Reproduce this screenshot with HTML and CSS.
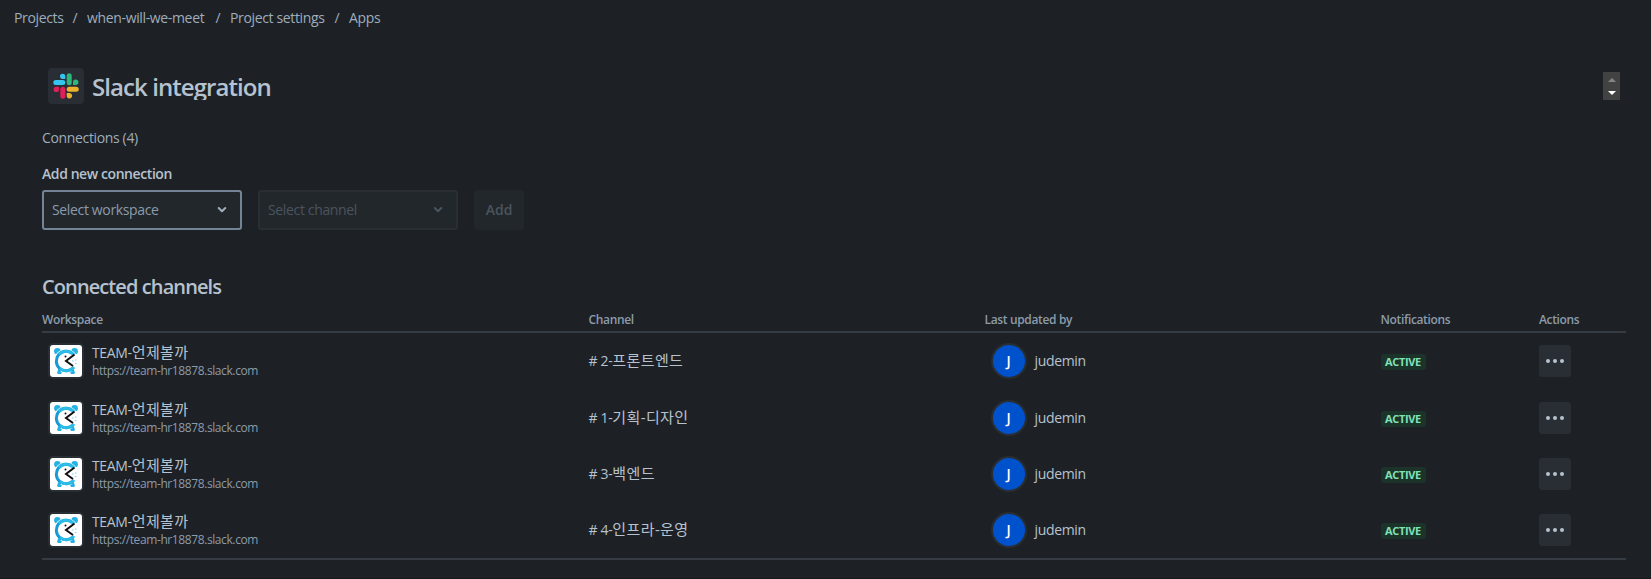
FILE: index.html
```html
<!DOCTYPE html>
<html lang="en">
<head>
	<meta charset="UTF-8">
	<title>Slack integration</title>
	<link rel="stylesheet" href="styles.css">
</head>
<body>
	<svg class="defs" width="0" height="0">
		<symbol id="clock" viewBox="0 0 32 32">
			<g fill="#27b2e4">
				<circle cx="7.4" cy="6.2" r="3.3"/>
				<circle cx="24.6" cy="6.2" r="3.3"/>
				<path d="M9 22.500l4 3-2 3.500H7.500zM23 22.500l-4 3 2 3.500h3.500z"/>
			</g>
			<circle cx="16" cy="16" r="12" fill="#fff"/>
			<path d="M10 23l-1.500 5.500M22 23l1.500 5.500" stroke="#27b2e4" stroke-width="3"/>
			<path d="M22 8.2A9.8 9.8 0 1 0 23 23" fill="none" stroke="#169bd8" stroke-width="3"/>
			<path d="M9 9.5A9.8 9.8 0 0 1 24 10M10 23.5A9.8 9.8 0 0 0 24 22" fill="none" stroke="#2bbce8" stroke-width="3"/>
			<path d="M24.5 9.5L16 16l7 5" fill="none" stroke="#111" stroke-width="2"/>
			<circle cx="15.5" cy="11.5" r="1" fill="#111"/>
			<path d="M22 16h1.5M25 15h1.5M25 18.500h1.500" stroke="#7ed1ef"/>
		</symbol>
		<symbol id="dots" viewBox="0 0 32 32">
			<circle cx="9" cy="16" r="2"/><circle cx="16" cy="16" r="2"/><circle cx="23" cy="16" r="2"/>
		</symbol>
		<symbol id="chevron" viewBox="0 0 10 8">
			<path d="M1.700 2L5 5.300 8.300 2" fill="none" stroke="currentColor" stroke-width="2" stroke-linecap="round" stroke-linejoin="round"/>
		</symbol>
	</svg>

	<nav class="breadcrumbs">
		<a class="c1">Projects</a><span>/</span><a class="c2">when-will-we-meet</a><span>/</span><a class="c3">Project settings</a><span>/</span><a>Apps</a>
	</nav>

	<main>
		<header>
			<svg class="logo" width="36" height="36" viewBox="0 0 36 36">
				<g fill="#36c5f0"><rect x="5.300" y="12" width="12" height="5" rx="2.500"/><path d="M17.300 11h-2.500a2.650 2.650 0 1 1 2.500-2.700z"/></g>
				<g fill="#2eb67d"><rect x="18.700" y="5.300" width="5" height="12" rx="2.500"/><path d="M25 17v-2.500a2.700 2.700 0 1 1 2.700 2.500z"/></g>
				<g fill="#e01e5a"><rect x="12.300" y="18.700" width="5" height="12" rx="2.500"/><path d="M11 18.700v2.500a2.700 2.700 0 1 1-2.700-2.500z"/></g>
				<g fill="#ecb22e"><rect x="18.700" y="18.700" width="12" height="5" rx="2.500"/><path d="M18.700 25h2.500a2.700 2.700 0 1 1-2.500 2.700z"/></g>
			</svg>
			<h1>Slack integration</h1>
			<div class="scroller"><i class="up"></i><i class="down"></i></div>
		</header>

		<p class="count">Connections (4)</p>

		<h3>Add new connection</h3>
		<form>
			<div class="select">Select workspace<svg width="10" height="8"><use href="#chevron"/></svg></div>
			<div class="select disabled">Select channel<svg width="10" height="8"><use href="#chevron"/></svg></div>
			<button type="button" disabled>Add</button>
		</form>

		<h2>Connected channels</h2>
		<table>
			<thead>
				<tr><th class="workspace">Workspace</th><th class="channel">Channel</th><th class="updated">Last updated by</th><th class="notifications">Notifications</th><th>Actions</th></tr>
			</thead>
			<tbody>
				<tr>
					<td><div class="team"><svg><use href="#clock"/></svg><div><b>TEAM-<span lang="ko">언제볼까</span></b><small>https://team-hr18878.slack.com</small></div></div></td>
					<td># 2-<span lang="ko">프론트엔드</span></td>
					<td><div class="user"><i>J</i><span>judemin</span></div></td>
					<td><span class="badge">ACTIVE</span></td>
					<td><svg class="more"><use href="#dots"/></svg></td>
				</tr>
				<tr>
					<td><div class="team"><svg><use href="#clock"/></svg><div><b>TEAM-<span lang="ko">언제볼까</span></b><small>https://team-hr18878.slack.com</small></div></div></td>
					<td># 1-<span lang="ko">기획-디자인</span></td>
					<td><div class="user"><i>J</i><span>judemin</span></div></td>
					<td><span class="badge">ACTIVE</span></td>
					<td><svg class="more"><use href="#dots"/></svg></td>
				</tr>
				<tr>
					<td><div class="team"><svg><use href="#clock"/></svg><div><b>TEAM-<span lang="ko">언제볼까</span></b><small>https://team-hr18878.slack.com</small></div></div></td>
					<td># 3-<span lang="ko">백엔드</span></td>
					<td><div class="user"><i>J</i><span>judemin</span></div></td>
					<td><span class="badge">ACTIVE</span></td>
					<td><svg class="more"><use href="#dots"/></svg></td>
				</tr>
				<tr>
					<td><div class="team"><svg><use href="#clock"/></svg><div><b>TEAM-<span lang="ko">언제볼까</span></b><small>https://team-hr18878.slack.com</small></div></div></td>
					<td># 4-<span lang="ko">인프라-운영</span></td>
					<td><div class="user"><i>J</i><span>judemin</span></div></td>
					<td><span class="badge">ACTIVE</span></td>
					<td><svg class="more"><use href="#dots"/></svg></td>
				</tr>
			</tbody>
		</table>
	</main>
</body>
</html>
```
FILE: styles.css
```css
* { box-sizing: border-box }
body {
	margin: 0;
	height: 579px;
	overflow: hidden;
	border-bottom: 1px solid #15181b;
	background: #1d2125;
	color: #b6c2cf;
	font: 14px/20px "Open Sans", "Noto Sans CJK KR", sans-serif;
	letter-spacing: -0.35px;
}
h1, h2, h3, p { margin: 0 }
svg { display: block }
.defs { position: absolute }
[lang=ko] {
	font-size: 15px;
	line-height: 1;
	letter-spacing: 0.4px;
}

.breadcrumbs {
	display: flex;
	padding: 8px 14px 0;
	height: 28px;
	color: #9fadbc;
}
.breadcrumbs span {
	width: 24px;
	text-align: center;
}
.c1 { width: 49px }
.c2 { width: 119px }
.c3 { width: 95px }
.breadcrumbs a { white-space: nowrap }

main { padding: 40px 25px 0 42px }
header {
	display: flex;
	height: 36px;
	padding-left: 6px;
}
.logo {
	background: #282e33;
	border-radius: 4px;
}
h1 {
	margin-left: 8px;
	height: 32px;
	overflow: hidden;
	font-size: 24px;
	font-weight: 600;
	line-height: 38px;
	letter-spacing: -0.93px;
}
.scroller {
	display: flex;
	flex-direction: column;
	justify-content: space-between;
	align-items: center;
	margin: 4px 6px 0 auto;
	padding: 6px 0 5px;
	width: 17px;
	height: 28px;
	background: #424242;
}
.scroller i { border: solid transparent; border-width: 0 4px }
.scroller .up { border-bottom: 4px solid #858585 }
.scroller .down { border-top: 4px solid #fff }

.count {
	padding-top: 24px;
	height: 60px;
	color: #9fadbc;
}
h3 {
	height: 26px;
	font-size: 14px;
	font-weight: 600;
	line-height: 20px;
	letter-spacing: -0.42px;
}
form {
	display: flex;
	gap: 16px;
	height: 40px;
}
.select {
	display: flex;
	justify-content: space-between;
	align-items: center;
	width: 200px;
	padding: 0 13px 0 8px;
	border: 2px solid #738496;
	border-radius: 3px;
	background: #22272b;
	color: #8c9bab;
}
.select svg { color: #9fadbc }
.disabled { border-color: #282e33; color: #4a545e }
.disabled svg { color: #4a545e }
button {
	width: 50px;
	padding: 0 0 2px;
	border: 0;
	border-radius: 3px;
	background: #22272b;
	color: #4a545e;
	font: 600 14px "Open Sans", sans-serif;
}
h2 {
	padding-top: 45px;
	height: 77px;
	font-size: 20px;
	font-weight: 600;
	line-height: 24px;
	letter-spacing: -0.9px;
}

table {
	width: 1584px;
	table-layout: fixed;
	border-spacing: 0;
	border-bottom: 2px solid #353c43;
}
th {
	height: 26px;
	padding: 1px 0 0;
	border-bottom: 2px solid #353c43;
	color: #8c9bab;
	font-size: 12px;
	font-weight: 600;
	line-height: 16px;
	text-align: left;
	white-space: nowrap;
}
.workspace { width: 546.5px }
.channel { width: 396px }
.updated { width: 396px }
.notifications { width: 158.500px }
td { height: 56px; padding: 0 }
tbody tr:first-child td { height: 57px; padding-bottom: 1px }
.team {
	display: flex;
	align-items: center;
	gap: 10px;
	padding-left: 8px;
}
.team svg {
	width: 32px;
	height: 32px;
	border-radius: 3px;
	background: #fff;
	box-shadow: 0 0 0 2px #282e33;
}
.team b, .team small { display: block }
.team b { font-weight: 400 }
.team small {
	color: #8c9bab;
	font-size: 12px;
	line-height: 16px;
	letter-spacing: -0.4px;
}
.user {
	display: flex;
	align-items: center;
	gap: 10px;
	padding-left: 8px;
}
.user i {
	width: 32px;
	height: 32px;
	border-radius: 50%;
	background: #0052cc;
	box-shadow: 0 0 0 2px #282e33;
	color: #fff;
	font: 600 14px/32px "Open Sans", sans-serif;
	text-align: center;
}
.badge {
	display: block;
	width: 45px;
	height: 16px;
	margin-top: 2px;
	border-radius: 3px;
	background: #1c3329;
	color: #7ee2b8;
	font-size: 11px;
	font-weight: 700;
	line-height: 16px;
	text-align: center;
}
.more {
	width: 32px;
	height: 32px;
	border-radius: 3px;
	background: #282e33;
	fill: #b6c2cf;
}
```
